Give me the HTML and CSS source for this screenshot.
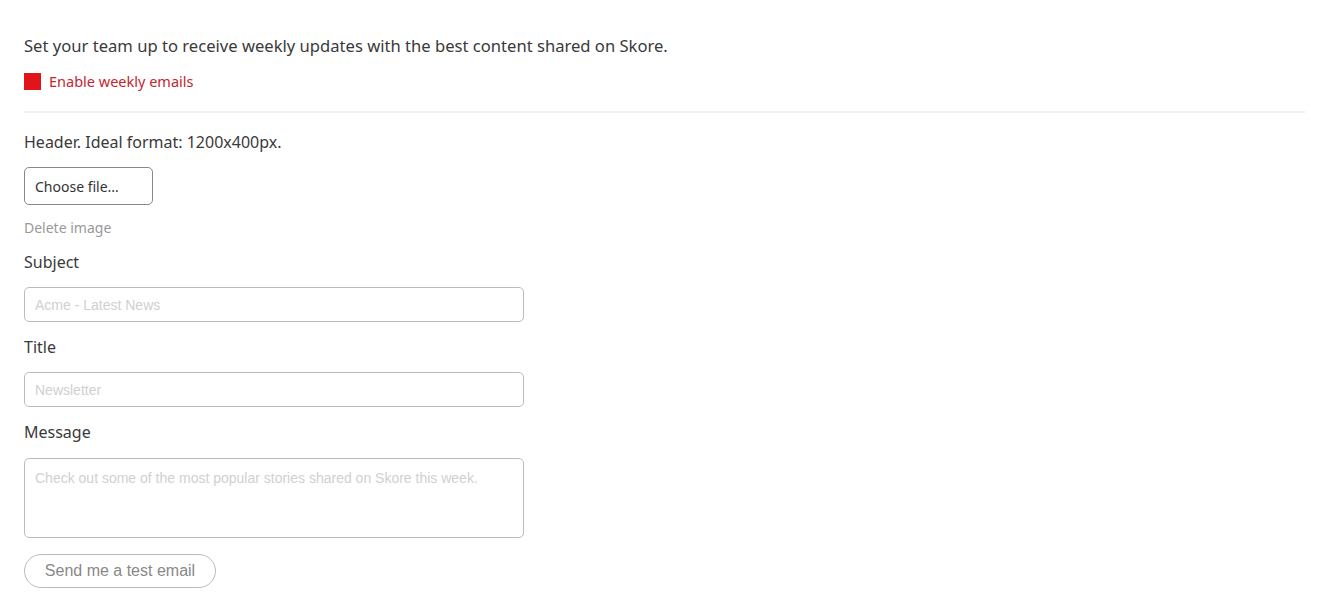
FILE: index.html
```html
<!DOCTYPE html>
<html>
<head>
<meta charset="utf-8">
<link rel="stylesheet" href="styles.css">
</head>
<body>
<div class="page">
  <p class="intro">Set your team up to receive weekly updates with the best content shared on Skore.</p>
  <label class="toggle"><span class="box"></span><span>Enable weekly emails</span></label>
  <hr class="sep">
  <p class="label">Header. Ideal format: 1200x400px.</p>
  <button class="file-btn">Choose file...</button>
  <a class="delete">Delete image</a>
  <p class="label">Subject</p>
  <input class="field" placeholder="Acme - Latest News">
  <p class="label">Title</p>
  <input class="field" placeholder="Newsletter">
  <p class="label">Message</p>
  <textarea class="field area" placeholder="Check out some of the most popular stories shared on Skore this week."></textarea>
  <button class="test-btn">Send me a test email</button>
</div>
</body>
</html>
```
FILE: styles.css
```css
html, body { margin: 0; padding: 0; background: #fff; }
body { font-family: "Noto Sans", "Open Sans", sans-serif; color: #333; }
.page { padding: 33px 19px 0 24px; display: flex; flex-direction: column; align-items: flex-start; }
.intro { margin: 0; font-size: 16.6px; line-height: 26px; color: #3a3a3a; }
.toggle { display: flex; align-items: center; gap: 8px; margin-top: 13px; color: #c4262e; font-size: 14.5px; line-height: 18px; }
.box { width: 17px; height: 17px; background: #e2141b; display: block; }
.sep { align-self: stretch; border: 0; border-top: 2px solid #f0f0f0; margin: 21px 0 0 0; }
.label { margin: 0; font-size: 16px; line-height: 22px; color: #3a3a3a; }
.sep + .label { margin-top: 18px; }
.file-btn { margin-top: 14px; width: 129px; height: 38px; border: 1px solid #888; border-radius: 5px; background: #fff; font-family: inherit; font-size: 14px; color: #333; text-align: left; padding: 0 10px; }
.delete { margin-top: 13px; font-size: 14px; line-height: 20px; color: #999; }
.delete + .label { margin-top: 13px; }
.field { margin-top: 14px; width: 500px; height: 35px; box-sizing: border-box; border: 1px solid #bbb; border-radius: 5px; padding: 0 10px; font-family: "Liberation Sans", Arial, sans-serif; font-size: 14px; color: #333; }
.field::placeholder { color: #d0d0d0; }
input.field + .label { margin-top: 14px; }
.area { margin-top: 15px; height: 80px; resize: none; padding: 9px 10px; line-height: 20px; }
.test-btn { margin-top: 16px; width: 192px; height: 34px; border: 1px solid #bbb; border-radius: 17px; background: #fff; font-family: "Liberation Sans", Arial, sans-serif; font-size: 16px; color: #888; }
```
